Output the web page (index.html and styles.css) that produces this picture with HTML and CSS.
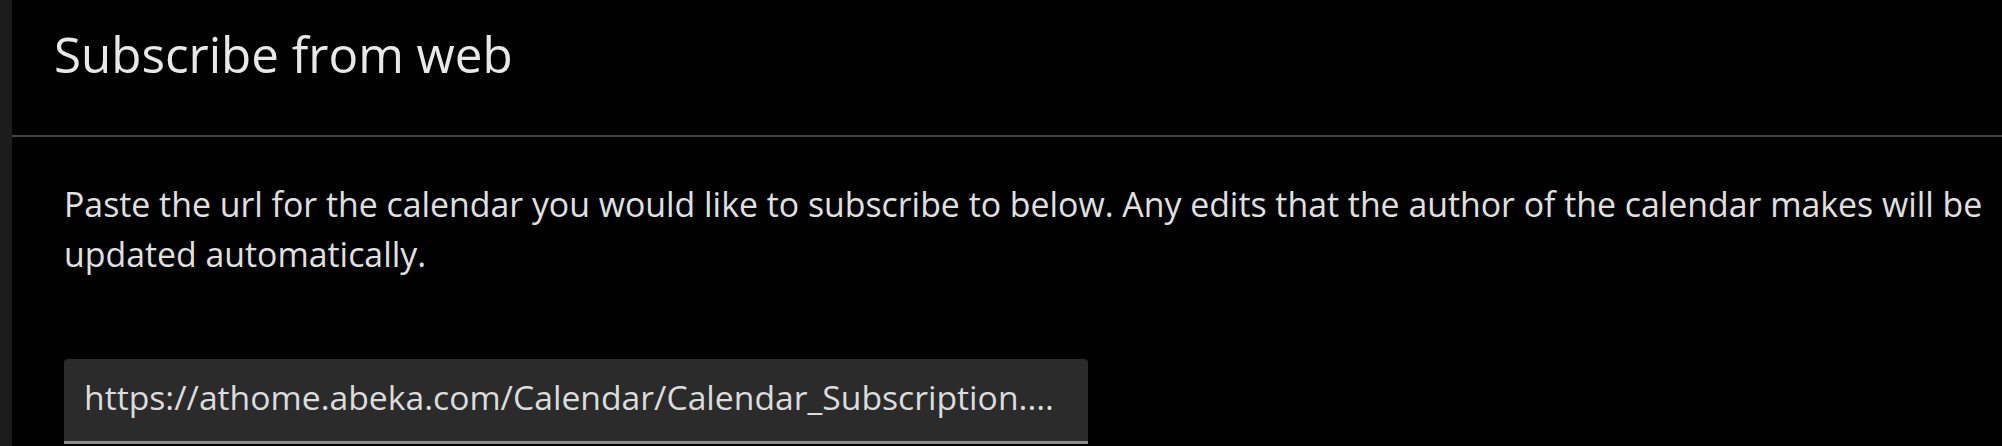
FILE: index.html
```html
<!DOCTYPE html>
<html lang="en">
<head>
<meta charset="utf-8">
<title>Subscribe from web</title>
<link rel="stylesheet" href="styles.css">
</head>
<body>
<div class="window">
  <div class="rail"></div>
  <main class="panel">
    <header class="panel-header">
      <h1 class="title">Subscribe from web</h1>
    </header>
    <section class="panel-body">
      <p class="desc">Paste the url for the calendar you would like to subscribe to below. Any edits that the author of the calendar makes will be updated automatically.</p>
      <div class="url-field">
        <span class="url-text">https://athome.abeka.com/Calendar/Calendar_Subscription....</span>
      </div>
    </section>
  </main>
</div>
</body>
</html>
```

FILE: styles.css
```css
html, body {
  margin: 0;
  padding: 0;
  background: #000;
  height: 100%;
  overflow: hidden;
}

.window {
  display: flex;
  min-height: 446px;
  font-family: "Open Sans", "Noto Sans", sans-serif;
  color: #e4e4e4;
}

.rail {
  width: 12px;
  flex: 0 0 12px;
  background: #1c1c1c;
}

.panel {
  flex: 1;
  display: flex;
  flex-direction: column;
}

.panel-header {
  padding: 21px 0 48px 42px;
  border-bottom: 2px solid #454545;
}

.title {
  margin: 0;
  font-size: 49.3px;
  line-height: 66px;
  font-weight: 400;
  color: #e8e8e8;
}

.panel-body {
  padding: 42px 0 0 52px;
}

.desc {
  margin: 0;
  font-size: 33.85px;
  line-height: 50px;
  color: #e0e0e0;
}

.url-field {
  margin-top: 80px;
  height: 76px;
  padding: 0 0 6px 20px;
  box-sizing: content-box;
  width: 1004px;
  background: #2b2b2b;
  border-radius: 4px 4px 0 0;
  border-bottom: 3px solid #8c8c8c;
  display: flex;
  align-items: center;
}

.url-text {
  font-size: 33.7px;
  line-height: 76px;
  color: #dcdcdc;
  white-space: nowrap;
}
```
